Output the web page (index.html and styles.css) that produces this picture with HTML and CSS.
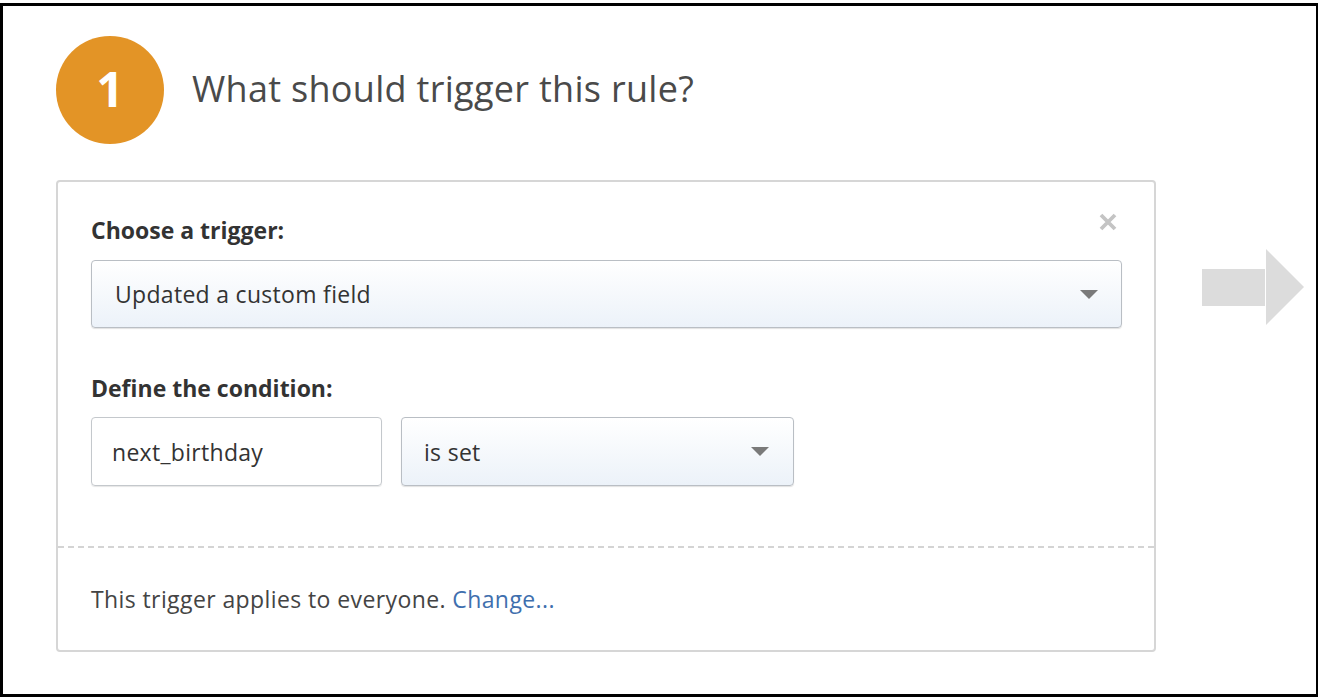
FILE: index.html
```html
<!DOCTYPE html>
<html>
<head>
<meta charset="utf-8">
<link rel="stylesheet" href="styles.css">
</head>
<body>
<div class="frame">
  <div class="header">
    <div class="step">1</div>
    <h1 class="title">What should trigger this rule?</h1>
  </div>
  <div class="main">
    <div class="card">
      <div class="card-body">
        <svg class="close" width="18" height="18" viewBox="0 0 18 18"><path d="M2 2 L16 16 M16 2 L2 16" stroke="#c4c4c4" stroke-width="3.8" stroke-linecap="butt"/></svg>
        <div class="label">Choose a trigger:</div>
        <div class="select select-wide">
          <span>Updated a custom field</span>
          <span class="caret"></span>
        </div>
        <div class="label label-2">Define the condition:</div>
        <div class="cond-row">
          <div class="input">next_birthday</div>
          <div class="select select-small">
            <span>is set</span>
            <span class="caret"></span>
          </div>
        </div>
      </div>
      <div class="card-foot"><span>This trigger applies to everyone. <a class="link" href="#">Change...</a></span></div>
    </div>
    <div class="arrow">
      <div class="arrow-shaft"></div>
      <div class="arrow-head"></div>
    </div>
  </div>
</div>
</body>
</html>
```
FILE: styles.css
```css
html, body {
  margin: 0;
  padding: 0;
  background: #fff;
}
body {
  font-family: "Open Sans", "Lato", sans-serif;
  color: #444;
}
.frame {
  margin-top: 3px;
  width: 1318px;
  height: 694px;
  box-sizing: border-box;
  border: 3px solid #000;
  border-right-width: 2px;
}
.header {
  display: flex;
  align-items: center;
  gap: 28px;
  padding-left: 53px;
  padding-top: 30px;
}
.step {
  width: 108px;
  height: 108px;
  box-sizing: border-box;
  padding-bottom: 4px;
  border-radius: 50%;
  background: #e39426;
  color: #fff;
  font-size: 48px;
  font-weight: 700;
  display: flex;
  align-items: center;
  justify-content: center;
}
.title {
  margin: 0;
  font-size: 36px;
  font-weight: 400;
  letter-spacing: 0.3px;
  color: #4a4a4a;
  position: relative;
  top: -2px;
}
.main {
  display: flex;
  align-items: flex-start;
  margin-top: 36px;
  padding-left: 53px;
}
.card {
  width: 1100px;
  height: 472px;
  box-sizing: border-box;
  border: 2px solid #d6d6d6;
  border-radius: 4px;
  display: flex;
  flex-direction: column;
}
.card-body {
  position: relative;
  padding: 36px 32px 0 33px;
  height: 366px;
  box-sizing: border-box;
  border-bottom: 2px dashed #d4d4d4;
}
.close {
  position: absolute;
  top: 31px;
  right: 37px;
}
.label {
  font-size: 23px;
  line-height: 24px;
  font-weight: 700;
  color: #333;
}
.label-2 {
  margin-top: 48px;
}
.select {
  box-sizing: border-box;
  border: 1px solid #b9bec4;
  border-radius: 4px;
  background: linear-gradient(#ffffff, #ecf2f9);
  box-shadow: 0 1px 1px rgba(0,0,0,0.12);
  display: flex;
  align-items: center;
  justify-content: space-between;
  font-size: 23px;
  letter-spacing: 0.3px;
  color: #333;
}
.select-wide {
  margin-top: 18px;
  width: 1031px;
  height: 68px;
  padding: 0 23px 0 23px;
}
.caret {
  width: 0;
  height: 0;
  border-left: 9px solid transparent;
  border-right: 9px solid transparent;
  border-top: 9px solid #7a7a7a;
}
.cond-row {
  display: flex;
  gap: 19px;
  margin-top: 17px;
}
.input {
  box-sizing: border-box;
  width: 291px;
  height: 69px;
  border: 1px solid #c4c8cc;
  border-radius: 4px;
  box-shadow: 0 1px 1px rgba(0,0,0,0.1);
  display: flex;
  align-items: center;
  padding-left: 20px;
  font-size: 23px;
  letter-spacing: 0.3px;
  color: #333;
}
.select-small {
  width: 393px;
  height: 69px;
  padding: 0 24px 0 22px;
}
.card-foot {
  flex: 1;
  display: flex;
  align-items: center;
  padding-left: 33px;
  font-size: 23px;
  letter-spacing: 0.4px;
  color: #444;
}
.card-foot .link {
  color: #3f6fae;
  text-decoration: none;
}
.arrow {
  display: flex;
  align-items: center;
  margin-left: 46px;
  margin-top: 69px;
}
.arrow-shaft {
  width: 63px;
  height: 37px;
  background: #dcdcdc;
}
.arrow-head {
  width: 0;
  height: 0;
  margin-left: 1px;
  border-top: 38px solid transparent;
  border-bottom: 38px solid transparent;
  border-left: 38px solid #dcdcdc;
}
```
